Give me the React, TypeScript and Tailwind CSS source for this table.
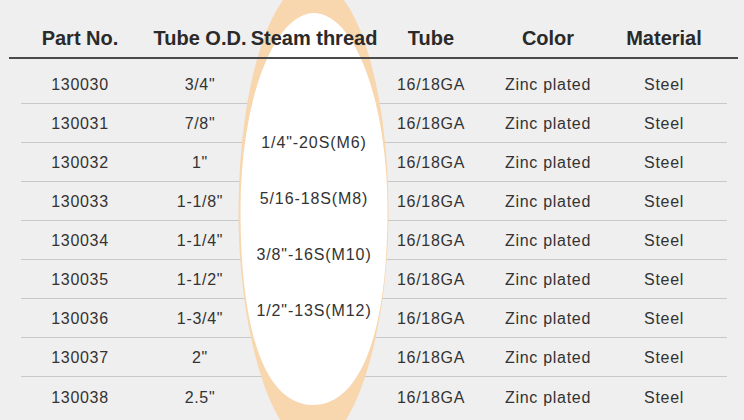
const COLS = "grid grid-cols-[118px_122px_106px_128px_106px_126px]";

const rows = [
  { part: "130030", od: '3/4"' },
  { part: "130031", od: '7/8"' },
  { part: "130032", od: '1"' },
  { part: "130033", od: '1-1/8"' },
  { part: "130034", od: '1-1/4"' },
  { part: "130035", od: '1-1/2"' },
  { part: "130036", od: '1-3/4"' },
  { part: "130037", od: '2"' },
  { part: "130038", od: '2.5"' },
];

const threads = ['1/4"-20S(M6)', "5/16-18S(M8)", '3/8"-16S(M10)', '1/2"-13S(M12)'];

const headers = ["Part No.", "Tube O.D.", "Steam thread", "Tube", "Color", "Material"];

function Cell({ children }: { children?: React.ReactNode }) {
  return <div className="flex justify-center whitespace-nowrap">{children}</div>;
}

export default function App() {
  return (
    <div
      className="relative w-[744px] h-[420px] overflow-hidden bg-[#efefef] text-[#333]"
      style={{ fontFamily: '"Liberation Sans", Arial, sans-serif' }}
    >
      {/* body rows sit under the highlight */}
      <div className="pt-[65px] ml-[21px] w-[706px]">
        {rows.map((r, i) => (
          <div
            key={r.part}
            className={`${COLS} h-[39px] items-center pt-[2px] text-[16px] tracking-[0.7px] ${
              i < rows.length - 1 ? "border-b border-[#c8c8c8]" : ""
            }`}
          >
            <Cell>{r.part}</Cell>
            <Cell>{r.od}</Cell>
            <Cell />
            <Cell>16/18GA</Cell>
            <Cell>Zinc plated</Cell>
            <Cell>Steel</Cell>
          </div>
        ))}
      </div>

      {/* highlight behind the thread column */}
      <svg
        className="absolute left-0 top-0 w-[744px] h-[420px] pointer-events-none"
        viewBox="0 0 744 420"
      >
        <path
          d="M238.5 212 A75 232 0 0 1 388.5 212 C388.5 330 355 445 313 445 C271 445 238.5 330 238.5 212 Z"
          fill="#f8d6ae"
        />
        <path
          d="M240.5 210 A73.5 197 0 0 1 387.5 210 C387.5 340 358 405 313 405 C268 405 240.5 340 240.5 210 Z"
          fill="#ffffff"
        />
      </svg>

      {/* header */}
      <div className="absolute left-[9px] top-0 z-10 w-[729px] h-[59px] pl-[12px] pt-[27px] border-b-2 border-[#4a4a4a]">
        <div className={`${COLS} text-[20px] leading-[22px] font-bold text-[#2a2a2a]`}>
          {headers.map((h) => (
            <Cell key={h}>{h}</Cell>
          ))}
        </div>
      </div>

      {/* merged thread column */}
      <div className="absolute left-[261px] top-[131px] z-10 w-[106px] flex flex-col gap-[32px] text-[16px] leading-6 tracking-[0.9px]">
        {threads.map((t) => (
          <Cell key={t}>{t}</Cell>
        ))}
      </div>
    </div>
  );
}
